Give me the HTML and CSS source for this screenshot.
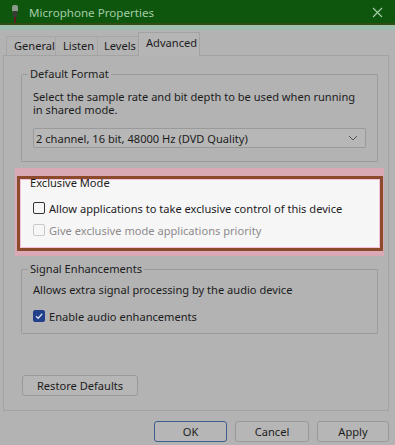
FILE: index.html
```html
<!DOCTYPE html>
<html lang="en">
<head>
  <meta charset="UTF-8">
  <title>Microphone Properties</title>
  <link rel="stylesheet" href="styles.css">
</head>
<body>
  <div class="window">
    <div class="titlebar">
      <svg class="mic" width="8" height="18" viewBox="0 0 8 18">
        <rect x="1" y="0" width="6" height="7" rx="2" fill="#8c9a8c"/>
        <rect x="2" y="6" width="4" height="6" fill="#3a3a3a"/>
        <rect x="3" y="12" width="2" height="6" fill="#5a2020"/>
      </svg>
      <span class="title">Microphone Properties</span>
      <svg class="close" width="11" height="11" viewBox="0 0 11 11">
        <path d="M1 1L10 10M10 1L1 10" stroke="#a3cca6" stroke-width="1.2"/>
      </svg>
    </div>

    <div class="tabs">
      <div class="tab">General</div>
      <div class="tab">Listen</div>
      <div class="tab">Levels</div>
      <div class="tab active">Advanced</div>
    </div>

    <div class="page">
      <fieldset class="group format">
        <legend>Default Format</legend>
        <p class="desc">Select the sample rate and bit depth to be used when running in shared mode.</p>
        <div class="select">
          <span>2 channel, 16 bit, 48000 Hz (DVD Quality)</span>
          <svg width="10" height="6" viewBox="0 0 10 6"><path d="M1 1L5 5L9 1" fill="none" stroke="#555" stroke-width="1"/></svg>
        </div>
      </fieldset>

      <div class="highlight">
        <div class="frame">
          <div class="frame-title">Exclusive Mode</div>
          <label class="check">
            <span class="box"></span>
            Allow applications to take exclusive control of this device
          </label>
          <label class="check disabled">
            <span class="box"></span>
            Give exclusive mode applications priority
          </label>
        </div>
      </div>

      <fieldset class="group signal">
        <legend>Signal Enhancements</legend>
        <p class="info">Allows extra signal processing by the audio device</p>
        <label class="check">
          <span class="box checked">
            <svg width="10" height="10" viewBox="0 0 10 10"><path d="M2 5.2L4.2 7.3L8.2 2.8" fill="none" stroke="#d8e0f0" stroke-width="1.3"/></svg>
          </span>
          Enable audio enhancements
        </label>
      </fieldset>

      <button class="btn restore">Restore Defaults</button>
    </div>

    <div class="actions">
      <button class="btn ok">OK</button>
      <button class="btn cancel">Cancel</button>
      <button class="btn apply">Apply</button>
    </div>
  </div>
</body>
</html>
```
FILE: styles.css
```css
* {
  box-sizing: border-box;
  margin: 0;
  padding: 0;
}

body {
  width: 395px;
  height: 445px;
  overflow: hidden;
  background: #b3b3b3;
  font-family: 'Noto Sans', sans-serif;
  font-size: 11.1px;
  color: #1c1c1c;
}

.window {
  height: 445px;
  display: flex;
  flex-direction: column;
}

.titlebar {
  height: 30px;
  background: #0e560e;
  border-bottom: 5px solid #9fbfb1;
  box-shadow: inset 0 -2px 0 #324c12;
  display: flex;
  align-items: center;
  padding: 0 10px 0 11px;
}

.titlebar .mic {
  margin-top: 2px;
}

.title {
  color: #a3cca6;
  font-size: 11.6px;
  margin-left: 10px;
  flex: 1;
  line-height: 25px;
}

.close {
  margin-right: 2px;
}

.tabs {
  display: flex;
  align-items: flex-end;
  height: 25px;
  padding-left: 6px;
  position: relative;
  z-index: 1;
}

.tab {
  height: 19px;
  line-height: 17px;
  padding: 0 6px 0 7px;
  border-left: 1px solid #a6a6a6;
  border-top: 1px solid #a6a6a6;
  color: #1c1c1c;
}

.tab:first-child {
  padding-left: 7px;
  width: 49px;
}

.tab:nth-child(2) {
  width: 42px;
}

.tab:nth-child(3) {
  width: 41px;
  padding-left: 6px;
}

.tab.active {
  height: 24px;
  width: 62px;
  line-height: 20px;
  padding-left: 7px;
  border: 1px solid #a3a3a3;
  border-bottom: none;
  background: #b5b5b5;
  margin-bottom: -1px;
}

.page {
  margin-left: 3px;
  width: 386px;
  height: 356px;
  border: 1px solid #a3a3a3;
  padding: 10px 10px 0 17px;
  display: flex;
  flex-direction: column;
  align-items: flex-start;
}

.group {
  width: 357px;
  border: 1px solid #9c9c9c;
  border-radius: 1px;
  padding: 0 11px;
}

.group legend {
  margin-left: -5px;
  padding: 0 2px;
  line-height: 16px;
}

.format {
  padding-bottom: 13px;
}

.desc {
  margin-top: 8px;
  line-height: 13px;
  padding-right: 8px;
}

.select {
  margin-top: 12px;
  height: 20px;
  width: 333px;
  border: 1px solid #9a9a9a;
  border-radius: 2px;
  background: #b7b7b7;
  display: flex;
  align-items: center;
  justify-content: space-between;
  padding: 0 7px 0 2px;
}

.highlight {
  margin: 6px 0 0 -6px;
  width: 369px;
  padding: 8px 1px 5px 2px;
  background: #d9a9b5;
}

.frame {
  border: 3px solid #8b4a2c;
  background: #f7f6f7;
  box-shadow: inset 0 0 0 1px #f3c2da;
  padding: 0 0 8px 13px;
}

.frame-title {
  line-height: 14px;
  margin: -3px 0 0 -3px;
}

.check {
  display: flex;
  align-items: center;
  height: 20px;
  gap: 4px;
}

.frame-title + .check {
  margin-top: 8px;
}

.check + .check {
  margin-top: 2px;
}

.box {
  width: 12px;
  height: 12px;
  border: 1px solid #333;
  border-radius: 2px;
  display: flex;
  align-items: center;
  justify-content: center;
}

.check.disabled {
  color: #8b8b8b;
}

.check.disabled .box {
  border-color: #c9c9c9;
}

.box.checked {
  background: #223f8a;
  border-color: #223f8a;
}

.signal {
  margin-top: 5px;
  padding-bottom: 7px;
}

.info {
  margin-top: 5px;
  line-height: 16px;
}

.signal .check {
  margin-top: 8px;
}

.btn {
  font-family: inherit;
  font-size: 11.1px;
  color: #1c1c1c;
  background: #b6b6b6;
  border: 1px solid #999;
  border-radius: 3px;
  height: 21px;
}

.restore {
  margin-top: 41px;
  margin-left: 1px;
  width: 116px;
}

.actions {
  display: flex;
  justify-content: flex-end;
  gap: 8px;
  padding-right: 6px;
  margin-top: 10px;
}

.ok {
  width: 73px;
  border-color: #3f5e8c;
}

.cancel {
  width: 74px;
}

.apply {
  width: 72px;
}
```
